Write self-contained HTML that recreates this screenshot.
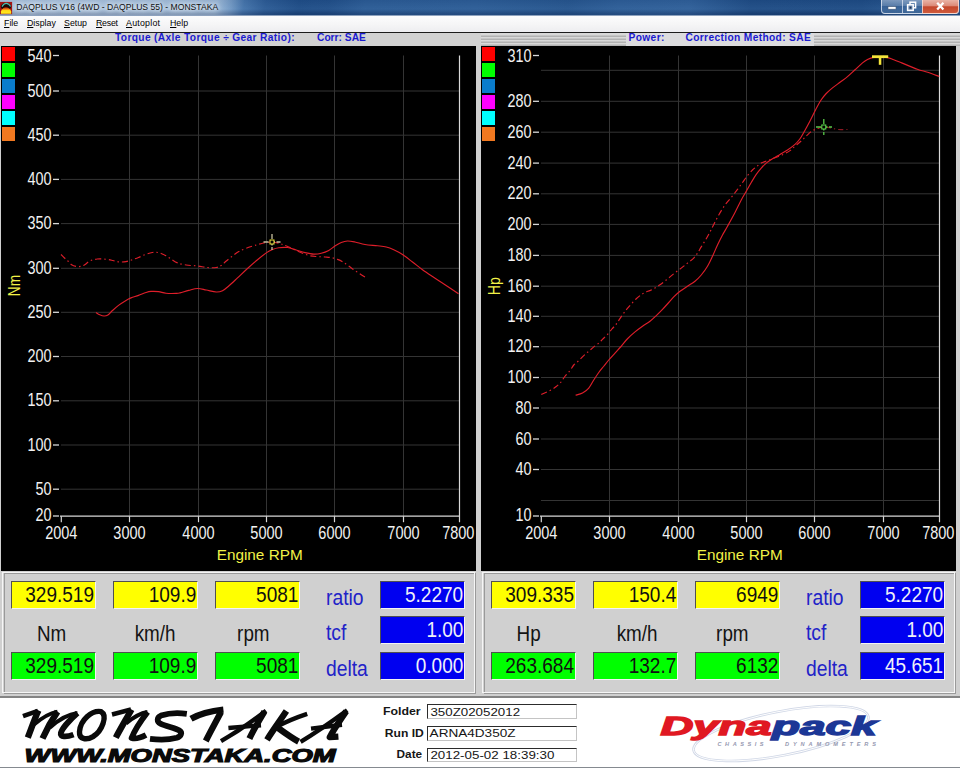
<!DOCTYPE html>
<html><head><meta charset="utf-8"><title>DAQPLUS</title>
<style>
html,body{margin:0;padding:0;}
body{width:960px;height:768px;overflow:hidden;position:relative;background:#d0d0d0;font-family:"Liberation Sans",sans-serif;}
div{position:absolute;box-sizing:border-box;}
#title{left:0;top:0;width:960px;height:15px;background:linear-gradient(100deg,#aac3de 0px,#a6c0dc 150px,#9dbad9 214px,#6f97c3 229px,#4474ab 241px,#2c5c96 262px,#1f4e88 295px,#21508a 325px,#2b5c96 360px,#2c5d97 470px,#26568f 560px,#2d5e98 610px,#2f609a 680px,#1f4d86 740px,#1e4c85 850px,#285891 900px,#2a5a93 960px);}
#title .shade{left:0;top:0;width:960px;height:15px;background:linear-gradient(180deg,rgba(0,0,30,0.06) 0,rgba(255,255,255,0.03) 60%,rgba(0,0,30,0.18) 90%,rgba(0,0,30,0.2) 100%);}
#ttext{left:16.3px;top:0px;font-size:8.6px;line-height:15px;color:#101010;white-space:nowrap;text-shadow:0 0 4px #fff,0 0 6px #e8f0f8;}
#menu{left:0;top:14.6px;width:960px;height:17.4px;background:linear-gradient(180deg,#fcfcfd 0,#f5f5f6 55%,#ededf0 100%);border-top:1.2px solid #8ea2be;}
#menu span{position:absolute;top:0px;font-size:8.8px;line-height:15px;color:#000;white-space:nowrap;}
#menu u{text-decoration:underline;}
#sep{left:0;top:32px;width:960px;height:1px;background:#1c1c1c;}
#hdrL{left:0;top:33px;width:481px;height:13px;background:#d2d2d2;}
#hdrR{left:481px;top:33px;width:479px;height:13px;background:repeating-linear-gradient(180deg,#d9d9d9 0,#d9d9d9 1.3px,#b2b2b2 1.7px,#b2b2b2 2.7px,#d9d9d9 3px);background-position:0 1px;}
.hl{font-weight:bold;font-size:10.2px;line-height:13px;color:#1a1ad0;white-space:pre;top:31.2px;letter-spacing:0.36px;}
#hlR{background:#dcdcde;height:13px;}
#blkL{left:1px;top:46px;width:475px;height:524.5px;background:#000;}
#blkR{left:481px;top:46px;width:475.3px;height:524.8px;background:#000;}
svg{position:absolute;left:0;top:0;}
.ax{font-family:"Liberation Sans",sans-serif;font-size:17.7px;fill:#f2f2f2;}
.yl{font-family:"Liberation Sans",sans-serif;font-size:15.3px;fill:#f2f248;}
.frW{border:1.3px solid #f6f6f6;}
.frD{border:1.3px solid #9a9a9a;}
.box{width:85px;height:28px;font-size:21.3px;line-height:27.8px;text-align:right;padding-right:0.7px;white-space:nowrap;border-top:1px solid #505050;border-left:1px solid #505050;border-right:1px solid #f4f4f4;border-bottom:1px solid #f4f4f4;}
.box span{display:inline-block;transform:scaleX(0.893);transform-origin:right center;}
.unit span{display:inline-block;transform:scaleX(0.885);transform-origin:center center;}
.blab span{display:inline-block;transform:scaleX(0.905);transform-origin:left center;}
.box.y{background:#ffff00;color:#101010;}
.box.g{background:#00ff00;color:#101010;}
.box.b{background:#0000f0;color:#f0f0f8;}
.unit{width:80px;text-align:center;font-size:21.3px;line-height:26px;color:#141414;}
.blab{font-size:21.3px;line-height:26px;color:#2222c8;}
#bot{left:0;top:697.6px;width:960px;height:70.4px;background:#fff;border-bottom:1.8px solid #858a90;}
#botline{left:0;top:696.4px;width:960px;height:1.3px;background:#848484;}
.fl{font-weight:bold;font-size:11.6px;line-height:14px;color:#111;text-align:right;width:60px;left:361px;}
.fi{left:427.3px;width:149.5px;height:14.8px;background:#fff;border-top:1.4px solid #2c2c2c;border-left:1.3px solid #2c2c2c;border-right:1px solid #c4c4c4;border-bottom:1px solid #c4c4c4;font-size:12.6px;line-height:13px;padding-left:2px;color:#111;white-space:nowrap;letter-spacing:0.45px;}
</style></head><body>
<div id="title"><div class="shade"></div></div>
<svg width="16" height="16" viewBox="0 0 16 16" style="left:0;top:0">
<defs><linearGradient id="dome" x1="0" y1="0" x2="0" y2="1"><stop offset="0" stop-color="#a82008"/><stop offset="0.28" stop-color="#f07010"/><stop offset="0.5" stop-color="#ffd818"/><stop offset="1" stop-color="#fff020"/></linearGradient></defs>
<rect x="0" y="1.9" width="12.1" height="12.3" fill="#a01412"/>
<ellipse cx="6" cy="6.6" rx="5.2" ry="3.6" fill="#1a0806"/>
<path d="M0.9 13.7 L0.9 11.4 C2 8.6 4 7.3 6 7.3 C8 7.3 10.2 8.6 11.2 11.4 L11.2 13.7 Z" fill="url(#dome)"/>
<path d="M2 6.6 C3.4 4 5 3.4 6.2 3.4 C7.6 3.4 9.4 4.2 10.6 6.6" fill="none" stroke="#4cbcae" stroke-width="1.2"/>
</svg>
<div id="ttext">DAQPLUS V16 (4WD - DAQPLUS 55) - MONSTAKA</div>
<!-- window buttons -->
<div style="left:881px;top:0;width:78px;height:13.5px;border:1px solid rgba(235,240,250,0.75);border-top:none;border-radius:0 0 4px 4px;background:linear-gradient(180deg,rgba(200,215,235,0.55) 0,rgba(150,175,205,0.45) 45%,rgba(70,110,160,0.5) 50%,rgba(90,130,175,0.5) 100%);"></div>
<div style="left:922px;top:0;width:37px;height:13.5px;border:1px solid rgba(245,225,220,0.8);border-top:none;border-radius:0 0 4px 0;background:linear-gradient(180deg,#e9b3a6 0,#dc8a78 45%,#c4472c 52%,#cf5a3c 100%);"></div>
<div style="left:901.5px;top:0;width:1px;height:13px;background:rgba(235,240,250,0.7);"></div>
<svg width="960" height="15" viewBox="0 0 960 15" style="left:0;top:0">
<rect x="888" y="6.6" width="8" height="2.6" fill="#fff" stroke="#445a78" stroke-width="0.6"/>
<rect x="910" y="2.2" width="5.6" height="5.6" fill="none" stroke="#fff" stroke-width="1.5"/>
<rect x="907.6" y="4.8" width="5.6" height="5.6" fill="#6d8db5" stroke="#fff" stroke-width="1.5"/>
<rect x="909.6" y="6.6" width="1.8" height="2" fill="#1e3350"/>
<path d="M937.2 2.8 L943.4 9.6 M943.4 2.8 L937.2 9.6" stroke="#fff" stroke-width="2.3" fill="none"/>
</svg>
<div id="menu">
<span style="left:4px"><u>F</u>ile</span>
<span style="left:27px"><u>D</u>isplay</span>
<span style="left:64px"><u>S</u>etup</span>
<span style="left:96px;letter-spacing:-0.25px"><u>R</u>eset</span>
<span style="left:126px;letter-spacing:0.25px"><u>A</u>utoplot</span>
<span style="left:170px"><u>H</u>elp</span>
</div>
<div id="sep"></div>
<div id="hdrL"></div>
<div id="hdrR"></div>
<div class="hl" style="left:115px">Torque (Axle Torque &#247; Gear Ratio):</div>
<div class="hl" style="left:317px;letter-spacing:0.02px">Corr: SAE</div>
<div class="hl" id="hlR" style="left:625.5px;width:188.5px;top:33px;"></div>
<div class="hl" style="left:628.6px">Power:</div>
<div class="hl" style="left:685.5px">Correction Method: SAE</div>
<div id="blkL"></div>
<div id="blkR"></div>
<svg width="960" height="768" viewBox="0 0 960 768">
<rect x="2" y="47" width="13" height="14" fill="#ff0000"/>
<rect x="2" y="63" width="13" height="14" fill="#00ff00"/>
<rect x="2" y="79" width="13" height="14" fill="#0a7ccc"/>
<rect x="2" y="95" width="13" height="14" fill="#ff00ff"/>
<rect x="2" y="111" width="13" height="14" fill="#00ffff"/>
<rect x="2" y="127" width="13" height="14" fill="#f07820"/>
<rect x="482" y="47" width="13" height="14" fill="#ff0000"/>
<rect x="482" y="63" width="13" height="14" fill="#00ff00"/>
<rect x="482" y="79" width="13" height="14" fill="#0a7ccc"/>
<rect x="482" y="95" width="13" height="14" fill="#ff00ff"/>
<rect x="482" y="111" width="13" height="14" fill="#00ffff"/>
<rect x="482" y="127" width="13" height="14" fill="#f07820"/>
<line x1="129.5" y1="55.5" x2="129.5" y2="516.2" stroke="#343434" stroke-width="1"/>
<line x1="198.5" y1="55.5" x2="198.5" y2="516.2" stroke="#343434" stroke-width="1"/>
<line x1="266.5" y1="55.5" x2="266.5" y2="516.2" stroke="#343434" stroke-width="1"/>
<line x1="334.5" y1="55.5" x2="334.5" y2="516.2" stroke="#343434" stroke-width="1"/>
<line x1="403.5" y1="55.5" x2="403.5" y2="516.2" stroke="#343434" stroke-width="1"/>
<line x1="61.0" y1="91.0" x2="459.5" y2="91.0" stroke="#343434" stroke-width="1"/>
<line x1="61.0" y1="135.2" x2="459.5" y2="135.2" stroke="#343434" stroke-width="1"/>
<line x1="61.0" y1="179.4" x2="459.5" y2="179.4" stroke="#343434" stroke-width="1"/>
<line x1="61.0" y1="223.6" x2="459.5" y2="223.6" stroke="#343434" stroke-width="1"/>
<line x1="61.0" y1="268.3" x2="459.5" y2="268.3" stroke="#343434" stroke-width="1"/>
<line x1="61.0" y1="312.3" x2="459.5" y2="312.3" stroke="#343434" stroke-width="1"/>
<line x1="61.0" y1="356.5" x2="459.5" y2="356.5" stroke="#343434" stroke-width="1"/>
<line x1="61.0" y1="400.8" x2="459.5" y2="400.8" stroke="#343434" stroke-width="1"/>
<line x1="61.0" y1="445.0" x2="459.5" y2="445.0" stroke="#343434" stroke-width="1"/>
<line x1="61.0" y1="489.2" x2="459.5" y2="489.2" stroke="#343434" stroke-width="1"/>
<line x1="459.5" y1="55.5" x2="459.5" y2="522.2" stroke="#d8d8d8" stroke-width="1.2"/>
<line x1="60.0" y1="516.2" x2="459.5" y2="516.2" stroke="#d8d8d8" stroke-width="1.2"/>
<line x1="61.3" y1="516.2" x2="61.3" y2="522.2" stroke="#d8d8d8" stroke-width="1.2"/>
<text x="61.3" y="538.9" text-anchor="middle" textLength="32.3" lengthAdjust="spacingAndGlyphs" class="ax">2004</text>
<line x1="129.5" y1="516.2" x2="129.5" y2="522.2" stroke="#d8d8d8" stroke-width="1.2"/>
<text x="129.5" y="538.9" text-anchor="middle" textLength="32.3" lengthAdjust="spacingAndGlyphs" class="ax">3000</text>
<line x1="198.5" y1="516.2" x2="198.5" y2="522.2" stroke="#d8d8d8" stroke-width="1.2"/>
<text x="198.5" y="538.9" text-anchor="middle" textLength="32.3" lengthAdjust="spacingAndGlyphs" class="ax">4000</text>
<line x1="266.5" y1="516.2" x2="266.5" y2="522.2" stroke="#d8d8d8" stroke-width="1.2"/>
<text x="266.5" y="538.9" text-anchor="middle" textLength="32.3" lengthAdjust="spacingAndGlyphs" class="ax">5000</text>
<line x1="334.5" y1="516.2" x2="334.5" y2="522.2" stroke="#d8d8d8" stroke-width="1.2"/>
<text x="334.5" y="538.9" text-anchor="middle" textLength="32.3" lengthAdjust="spacingAndGlyphs" class="ax">6000</text>
<line x1="403.5" y1="516.2" x2="403.5" y2="522.2" stroke="#d8d8d8" stroke-width="1.2"/>
<text x="403.5" y="538.9" text-anchor="middle" textLength="32.3" lengthAdjust="spacingAndGlyphs" class="ax">7000</text>
<text x="458.3" y="538.9" text-anchor="middle" textLength="32.3" lengthAdjust="spacingAndGlyphs" class="ax">7800</text>
<line x1="53.0" y1="55.5" x2="59.0" y2="55.5" stroke="#d8d8d8" stroke-width="1.3"/>
<text x="51.5" y="61.8" text-anchor="end" textLength="24.0" lengthAdjust="spacingAndGlyphs" class="ax">540</text>
<line x1="53.0" y1="91.0" x2="59.0" y2="91.0" stroke="#d8d8d8" stroke-width="1.3"/>
<text x="51.5" y="96.6" text-anchor="end" textLength="24.0" lengthAdjust="spacingAndGlyphs" class="ax">500</text>
<line x1="53.0" y1="135.2" x2="59.0" y2="135.2" stroke="#d8d8d8" stroke-width="1.3"/>
<text x="51.5" y="140.8" text-anchor="end" textLength="24.0" lengthAdjust="spacingAndGlyphs" class="ax">450</text>
<line x1="53.0" y1="179.4" x2="59.0" y2="179.4" stroke="#d8d8d8" stroke-width="1.3"/>
<text x="51.5" y="185.0" text-anchor="end" textLength="24.0" lengthAdjust="spacingAndGlyphs" class="ax">400</text>
<line x1="53.0" y1="223.6" x2="59.0" y2="223.6" stroke="#d8d8d8" stroke-width="1.3"/>
<text x="51.5" y="229.2" text-anchor="end" textLength="24.0" lengthAdjust="spacingAndGlyphs" class="ax">350</text>
<line x1="53.0" y1="268.3" x2="59.0" y2="268.3" stroke="#d8d8d8" stroke-width="1.3"/>
<text x="51.5" y="273.9" text-anchor="end" textLength="24.0" lengthAdjust="spacingAndGlyphs" class="ax">300</text>
<line x1="53.0" y1="312.3" x2="59.0" y2="312.3" stroke="#d8d8d8" stroke-width="1.3"/>
<text x="51.5" y="317.9" text-anchor="end" textLength="24.0" lengthAdjust="spacingAndGlyphs" class="ax">250</text>
<line x1="53.0" y1="356.5" x2="59.0" y2="356.5" stroke="#d8d8d8" stroke-width="1.3"/>
<text x="51.5" y="362.1" text-anchor="end" textLength="24.0" lengthAdjust="spacingAndGlyphs" class="ax">200</text>
<line x1="53.0" y1="400.8" x2="59.0" y2="400.8" stroke="#d8d8d8" stroke-width="1.3"/>
<text x="51.5" y="406.4" text-anchor="end" textLength="24.0" lengthAdjust="spacingAndGlyphs" class="ax">150</text>
<line x1="53.0" y1="445.0" x2="59.0" y2="445.0" stroke="#d8d8d8" stroke-width="1.3"/>
<text x="51.5" y="450.6" text-anchor="end" textLength="24.0" lengthAdjust="spacingAndGlyphs" class="ax">100</text>
<line x1="53.0" y1="489.2" x2="59.0" y2="489.2" stroke="#d8d8d8" stroke-width="1.3"/>
<text x="51.5" y="494.8" text-anchor="end" textLength="16.0" lengthAdjust="spacingAndGlyphs" class="ax">50</text>
<line x1="53.0" y1="516.0" x2="59.0" y2="516.0" stroke="#d8d8d8" stroke-width="1.3"/>
<text x="51.5" y="520.8" text-anchor="end" textLength="16.0" lengthAdjust="spacingAndGlyphs" class="ax">20</text>
<text x="259.7" y="560" text-anchor="middle" class="yl">Engine RPM</text>
<text transform="translate(19.6,285.6) rotate(-90)" text-anchor="middle" style="font-size:16.2px" class="yl" textLength="21.2" lengthAdjust="spacingAndGlyphs">Nm</text>
<path d="M61.00 254.50 C61.58 255.08 63.35 256.92 64.50 258.00 C65.65 259.08 66.72 259.88 67.90 261.00 C69.08 262.12 70.25 263.85 71.60 264.75 C72.95 265.65 74.53 266.12 76.00 266.40 C77.47 266.67 78.94 266.67 80.40 266.40 C81.86 266.12 83.19 265.65 84.75 264.75 C86.31 263.85 87.67 261.96 89.75 261.00 C91.83 260.04 94.54 259.29 97.25 259.00 C99.96 258.71 103.39 259.00 106.00 259.25 C108.61 259.50 110.82 260.06 112.90 260.50 C114.98 260.94 116.32 261.72 118.50 261.90 C120.68 262.08 123.71 261.96 126.00 261.60 C128.29 261.24 130.17 260.43 132.25 259.75 C134.33 259.07 136.31 258.38 138.50 257.50 C140.69 256.62 143.11 255.33 145.40 254.50 C147.69 253.67 150.07 252.82 152.25 252.50 C154.43 252.18 156.31 252.12 158.50 252.60 C160.69 253.08 163.32 254.33 165.40 255.40 C167.48 256.47 168.98 257.75 171.00 259.00 C173.02 260.25 174.96 261.90 177.50 262.90 C180.04 263.90 182.92 264.48 186.25 265.00 C189.58 265.52 193.96 265.58 197.50 266.00 C201.04 266.42 204.38 267.25 207.50 267.50 C210.62 267.75 213.96 267.85 216.25 267.50 C218.54 267.15 219.58 266.48 221.25 265.40 C222.92 264.32 224.38 262.57 226.25 261.00 C228.12 259.43 230.42 257.57 232.50 256.00 C234.58 254.43 236.46 252.89 238.75 251.60 C241.04 250.31 243.33 249.35 246.25 248.25 C249.17 247.15 253.54 245.83 256.25 245.00 C258.96 244.17 260.42 243.71 262.50 243.25 C264.58 242.79 267.17 242.46 268.75 242.25 C270.33 242.04 270.12 241.79 272.00 242.00 C273.88 242.21 278.04 243.00 280.00 243.50 C281.96 244.00 282.29 244.42 283.75 245.00 C285.21 245.58 286.67 246.10 288.75 247.00 C290.83 247.90 293.96 249.36 296.25 250.40 C298.54 251.44 300.21 252.36 302.50 253.25 C304.79 254.14 307.50 255.19 310.00 255.75 C312.50 256.31 315.00 256.39 317.50 256.60 C320.00 256.81 322.71 256.83 325.00 257.00 C327.29 257.17 329.17 257.20 331.25 257.60 C333.33 258.00 335.52 258.67 337.50 259.40 C339.48 260.13 341.23 260.90 343.10 262.00 C344.98 263.10 346.77 264.57 348.75 266.00 C350.73 267.43 352.92 269.14 355.00 270.60 C357.08 272.06 359.42 273.60 361.25 274.75 C363.08 275.90 365.21 277.04 366.00 277.50" fill="none" stroke="#de1e2a" stroke-width="1.15" stroke-dasharray="6 3 1.5 3"/>
<path d="M96.00 312.50 C96.62 312.88 98.42 314.17 99.75 314.75 C101.08 315.33 102.64 315.96 104.00 316.00 C105.36 316.04 106.53 315.88 107.90 315.00 C109.28 314.12 110.48 312.35 112.25 310.75 C114.02 309.15 116.21 307.12 118.50 305.40 C120.79 303.67 123.92 301.65 126.00 300.40 C128.08 299.15 128.92 298.73 131.00 297.90 C133.08 297.07 136.00 296.30 138.50 295.40 C141.00 294.50 143.92 293.17 146.00 292.50 C148.08 291.83 148.92 291.55 151.00 291.40 C153.08 291.25 156.00 291.29 158.50 291.60 C161.00 291.91 163.08 292.95 166.00 293.25 C168.92 293.55 173.67 293.46 176.00 293.40 C178.33 293.34 177.88 293.40 180.00 292.90 C182.12 292.40 185.83 291.13 188.75 290.40 C191.67 289.67 194.58 288.57 197.50 288.50 C200.42 288.43 203.12 289.42 206.25 290.00 C209.38 290.58 213.54 291.88 216.25 292.00 C218.96 292.12 220.42 291.75 222.50 290.75 C224.58 289.75 226.25 288.14 228.75 286.00 C231.25 283.86 234.38 280.82 237.50 277.90 C240.62 274.98 244.17 271.52 247.50 268.50 C250.83 265.48 254.38 262.35 257.50 259.75 C260.62 257.15 263.75 254.61 266.25 252.90 C268.75 251.19 270.42 250.37 272.50 249.50 C274.58 248.63 276.25 248.03 278.75 247.70 C281.25 247.37 284.58 247.12 287.50 247.50 C290.42 247.88 293.33 249.15 296.25 250.00 C299.17 250.85 302.08 251.92 305.00 252.60 C307.92 253.28 311.04 253.99 313.75 254.10 C316.46 254.21 318.75 253.87 321.25 253.25 C323.75 252.63 326.46 251.61 328.75 250.40 C331.04 249.19 332.92 247.32 335.00 246.00 C337.08 244.68 339.17 243.33 341.25 242.50 C343.33 241.67 345.21 241.08 347.50 241.00 C349.79 240.92 352.08 241.42 355.00 242.00 C357.92 242.58 361.25 243.88 365.00 244.50 C368.75 245.12 373.96 245.33 377.50 245.75 C381.04 246.17 383.54 246.33 386.25 247.00 C388.96 247.67 391.04 248.50 393.75 249.75 C396.46 251.00 399.38 252.46 402.50 254.50 C405.62 256.54 409.17 259.46 412.50 262.00 C415.83 264.54 419.17 267.32 422.50 269.75 C425.83 272.18 428.75 274.10 432.50 276.60 C436.25 279.10 440.67 281.89 445.00 284.75 C449.33 287.61 456.25 292.25 458.50 293.75" fill="none" stroke="#de1e2a" stroke-width="1.15"/>

<g>
<line x1="263.5" y1="242" x2="280.5" y2="242" stroke="#c8c0a0" stroke-width="1.3" stroke-dasharray="5 1.5"/>
<line x1="272" y1="234" x2="272" y2="250" stroke="#c8c0a0" stroke-width="1.3" stroke-dasharray="5 1.5"/>
<rect x="270" y="240" width="4" height="4" fill="#000" stroke="#f0e840" stroke-width="1"/>
</g>
<line x1="609.5" y1="55.5" x2="609.5" y2="516.2" stroke="#343434" stroke-width="1"/>
<line x1="678.5" y1="55.5" x2="678.5" y2="516.2" stroke="#343434" stroke-width="1"/>
<line x1="746.5" y1="55.5" x2="746.5" y2="516.2" stroke="#343434" stroke-width="1"/>
<line x1="814.5" y1="55.5" x2="814.5" y2="516.2" stroke="#343434" stroke-width="1"/>
<line x1="883.5" y1="55.5" x2="883.5" y2="516.2" stroke="#343434" stroke-width="1"/>
<line x1="541.0" y1="70.3" x2="939.5" y2="70.3" stroke="#343434" stroke-width="1"/>
<line x1="541.0" y1="101.3" x2="939.5" y2="101.3" stroke="#343434" stroke-width="1"/>
<line x1="541.0" y1="132.2" x2="939.5" y2="132.2" stroke="#343434" stroke-width="1"/>
<line x1="541.0" y1="163.1" x2="939.5" y2="163.1" stroke="#343434" stroke-width="1"/>
<line x1="541.0" y1="193.8" x2="939.5" y2="193.8" stroke="#343434" stroke-width="1"/>
<line x1="541.0" y1="224.4" x2="939.5" y2="224.4" stroke="#343434" stroke-width="1"/>
<line x1="541.0" y1="255.4" x2="939.5" y2="255.4" stroke="#343434" stroke-width="1"/>
<line x1="541.0" y1="286.2" x2="939.5" y2="286.2" stroke="#343434" stroke-width="1"/>
<line x1="541.0" y1="316.3" x2="939.5" y2="316.3" stroke="#343434" stroke-width="1"/>
<line x1="541.0" y1="346.7" x2="939.5" y2="346.7" stroke="#343434" stroke-width="1"/>
<line x1="541.0" y1="377.5" x2="939.5" y2="377.5" stroke="#343434" stroke-width="1"/>
<line x1="541.0" y1="408.0" x2="939.5" y2="408.0" stroke="#343434" stroke-width="1"/>
<line x1="541.0" y1="439.0" x2="939.5" y2="439.0" stroke="#343434" stroke-width="1"/>
<line x1="541.0" y1="469.5" x2="939.5" y2="469.5" stroke="#343434" stroke-width="1"/>
<line x1="541.0" y1="500.5" x2="939.5" y2="500.5" stroke="#343434" stroke-width="1"/>
<line x1="939.5" y1="55.5" x2="939.5" y2="522.2" stroke="#d8d8d8" stroke-width="1.2"/>
<line x1="540.0" y1="516.2" x2="939.5" y2="516.2" stroke="#d8d8d8" stroke-width="1.2"/>
<line x1="541.3" y1="516.2" x2="541.3" y2="522.2" stroke="#d8d8d8" stroke-width="1.2"/>
<text x="541.3" y="538.9" text-anchor="middle" textLength="32.3" lengthAdjust="spacingAndGlyphs" class="ax">2004</text>
<line x1="609.5" y1="516.2" x2="609.5" y2="522.2" stroke="#d8d8d8" stroke-width="1.2"/>
<text x="609.5" y="538.9" text-anchor="middle" textLength="32.3" lengthAdjust="spacingAndGlyphs" class="ax">3000</text>
<line x1="678.5" y1="516.2" x2="678.5" y2="522.2" stroke="#d8d8d8" stroke-width="1.2"/>
<text x="678.5" y="538.9" text-anchor="middle" textLength="32.3" lengthAdjust="spacingAndGlyphs" class="ax">4000</text>
<line x1="746.5" y1="516.2" x2="746.5" y2="522.2" stroke="#d8d8d8" stroke-width="1.2"/>
<text x="746.5" y="538.9" text-anchor="middle" textLength="32.3" lengthAdjust="spacingAndGlyphs" class="ax">5000</text>
<line x1="814.5" y1="516.2" x2="814.5" y2="522.2" stroke="#d8d8d8" stroke-width="1.2"/>
<text x="814.5" y="538.9" text-anchor="middle" textLength="32.3" lengthAdjust="spacingAndGlyphs" class="ax">6000</text>
<line x1="883.5" y1="516.2" x2="883.5" y2="522.2" stroke="#d8d8d8" stroke-width="1.2"/>
<text x="883.5" y="538.9" text-anchor="middle" textLength="32.3" lengthAdjust="spacingAndGlyphs" class="ax">7000</text>
<text x="938.3" y="538.9" text-anchor="middle" textLength="32.3" lengthAdjust="spacingAndGlyphs" class="ax">7800</text>
<line x1="533.0" y1="55.5" x2="539.0" y2="55.5" stroke="#d8d8d8" stroke-width="1.3"/>
<text x="531.5" y="61.8" text-anchor="end" textLength="24.0" lengthAdjust="spacingAndGlyphs" class="ax">310</text>
<line x1="533.0" y1="101.3" x2="539.0" y2="101.3" stroke="#d8d8d8" stroke-width="1.3"/>
<text x="531.5" y="106.9" text-anchor="end" textLength="24.0" lengthAdjust="spacingAndGlyphs" class="ax">280</text>
<line x1="533.0" y1="132.2" x2="539.0" y2="132.2" stroke="#d8d8d8" stroke-width="1.3"/>
<text x="531.5" y="137.8" text-anchor="end" textLength="24.0" lengthAdjust="spacingAndGlyphs" class="ax">260</text>
<line x1="533.0" y1="163.1" x2="539.0" y2="163.1" stroke="#d8d8d8" stroke-width="1.3"/>
<text x="531.5" y="168.7" text-anchor="end" textLength="24.0" lengthAdjust="spacingAndGlyphs" class="ax">240</text>
<line x1="533.0" y1="193.8" x2="539.0" y2="193.8" stroke="#d8d8d8" stroke-width="1.3"/>
<text x="531.5" y="199.4" text-anchor="end" textLength="24.0" lengthAdjust="spacingAndGlyphs" class="ax">220</text>
<line x1="533.0" y1="224.4" x2="539.0" y2="224.4" stroke="#d8d8d8" stroke-width="1.3"/>
<text x="531.5" y="230.0" text-anchor="end" textLength="24.0" lengthAdjust="spacingAndGlyphs" class="ax">200</text>
<line x1="533.0" y1="255.4" x2="539.0" y2="255.4" stroke="#d8d8d8" stroke-width="1.3"/>
<text x="531.5" y="261.0" text-anchor="end" textLength="24.0" lengthAdjust="spacingAndGlyphs" class="ax">180</text>
<line x1="533.0" y1="286.2" x2="539.0" y2="286.2" stroke="#d8d8d8" stroke-width="1.3"/>
<text x="531.5" y="291.8" text-anchor="end" textLength="24.0" lengthAdjust="spacingAndGlyphs" class="ax">160</text>
<line x1="533.0" y1="316.3" x2="539.0" y2="316.3" stroke="#d8d8d8" stroke-width="1.3"/>
<text x="531.5" y="321.9" text-anchor="end" textLength="24.0" lengthAdjust="spacingAndGlyphs" class="ax">140</text>
<line x1="533.0" y1="346.7" x2="539.0" y2="346.7" stroke="#d8d8d8" stroke-width="1.3"/>
<text x="531.5" y="352.3" text-anchor="end" textLength="24.0" lengthAdjust="spacingAndGlyphs" class="ax">120</text>
<line x1="533.0" y1="377.5" x2="539.0" y2="377.5" stroke="#d8d8d8" stroke-width="1.3"/>
<text x="531.5" y="383.1" text-anchor="end" textLength="24.0" lengthAdjust="spacingAndGlyphs" class="ax">100</text>
<line x1="533.0" y1="408.0" x2="539.0" y2="408.0" stroke="#d8d8d8" stroke-width="1.3"/>
<text x="531.5" y="413.6" text-anchor="end" textLength="16.0" lengthAdjust="spacingAndGlyphs" class="ax">80</text>
<line x1="533.0" y1="439.0" x2="539.0" y2="439.0" stroke="#d8d8d8" stroke-width="1.3"/>
<text x="531.5" y="444.6" text-anchor="end" textLength="16.0" lengthAdjust="spacingAndGlyphs" class="ax">60</text>
<line x1="533.0" y1="469.5" x2="539.0" y2="469.5" stroke="#d8d8d8" stroke-width="1.3"/>
<text x="531.5" y="475.1" text-anchor="end" textLength="16.0" lengthAdjust="spacingAndGlyphs" class="ax">40</text>
<line x1="533.0" y1="516.0" x2="539.0" y2="516.0" stroke="#d8d8d8" stroke-width="1.3"/>
<text x="531.5" y="520.8" text-anchor="end" textLength="16.0" lengthAdjust="spacingAndGlyphs" class="ax">10</text>
<text x="739.7" y="560" text-anchor="middle" class="yl">Engine RPM</text>
<text transform="translate(499.6,286.2) rotate(-90)" text-anchor="middle" style="font-size:16.2px" class="yl" textLength="17.9" lengthAdjust="spacingAndGlyphs">Hp</text>
<path d="M541.25 394.40 C542.71 393.77 547.50 391.92 550.00 390.60 C552.50 389.28 554.48 387.85 556.25 386.50 C558.02 385.15 559.14 384.21 560.60 382.50 C562.06 380.79 563.43 378.23 565.00 376.25 C566.57 374.27 568.54 372.48 570.00 370.60 C571.46 368.73 572.29 366.67 573.75 365.00 C575.21 363.33 577.08 362.17 578.75 360.60 C580.42 359.03 582.08 357.16 583.75 355.60 C585.42 354.04 587.08 352.70 588.75 351.25 C590.42 349.80 592.08 348.26 593.75 346.90 C595.42 345.54 597.29 344.35 598.75 343.10 C600.21 341.85 601.04 340.85 602.50 339.40 C603.96 337.95 605.93 336.13 607.50 334.40 C609.07 332.67 610.55 330.57 611.90 329.00 C613.25 327.43 614.35 326.60 615.60 325.00 C616.85 323.40 618.04 321.38 619.40 319.40 C620.76 317.42 622.19 315.18 623.75 313.10 C625.31 311.02 626.67 309.29 628.75 306.90 C630.83 304.51 633.75 301.05 636.25 298.75 C638.75 296.45 641.25 294.56 643.75 293.10 C646.25 291.64 648.75 291.25 651.25 290.00 C653.75 288.75 656.25 287.27 658.75 285.60 C661.25 283.93 663.75 281.98 666.25 280.00 C668.75 278.02 671.25 275.73 673.75 273.75 C676.25 271.77 678.96 269.88 681.25 268.10 C683.54 266.33 685.42 264.77 687.50 263.10 C689.58 261.43 692.08 259.77 693.75 258.10 C695.42 256.43 696.25 254.97 697.50 253.10 C698.75 251.23 699.79 249.29 701.25 246.90 C702.71 244.51 704.79 241.25 706.25 238.75 C707.71 236.25 708.79 234.19 710.00 231.90 C711.21 229.61 712.04 227.82 713.50 225.00 C714.96 222.18 716.83 218.33 718.75 215.00 C720.67 211.67 722.92 207.92 725.00 205.00 C727.08 202.08 729.17 200.10 731.25 197.50 C733.33 194.90 735.62 191.90 737.50 189.40 C739.38 186.90 740.83 184.80 742.50 182.50 C744.17 180.20 745.83 177.68 747.50 175.60 C749.17 173.52 751.04 171.45 752.50 170.00 C753.96 168.55 754.79 168.05 756.25 166.90 C757.71 165.75 759.38 164.15 761.25 163.10 C763.12 162.05 765.21 161.49 767.50 160.60 C769.79 159.71 772.50 158.72 775.00 157.75 C777.50 156.78 780.00 155.94 782.50 154.75 C785.00 153.56 787.92 152.02 790.00 150.60 C792.08 149.18 793.33 147.68 795.00 146.25 C796.67 144.82 798.54 143.28 800.00 142.00 C801.46 140.72 802.60 139.70 803.75 138.60 C804.90 137.50 805.65 136.57 806.90 135.40 C808.15 134.23 809.48 132.75 811.25 131.60 C813.02 130.45 815.42 129.27 817.50 128.50 C819.58 127.73 822.71 127.25 823.75 127.00" fill="none" stroke="#de1e2a" stroke-width="1.15" stroke-dasharray="6 3 1.5 3"/>
<path d="M575.60 395.25 C576.75 394.89 580.31 394.29 582.50 393.10 C584.69 391.91 586.88 390.28 588.75 388.10 C590.62 385.92 592.08 382.60 593.75 380.00 C595.42 377.40 597.08 374.79 598.75 372.50 C600.42 370.21 602.08 368.33 603.75 366.25 C605.42 364.17 606.88 362.19 608.75 360.00 C610.62 357.81 612.92 355.39 615.00 353.10 C617.08 350.81 619.17 348.64 621.25 346.25 C623.33 343.86 625.21 341.14 627.50 338.75 C629.79 336.36 632.50 333.98 635.00 331.90 C637.50 329.82 640.00 328.02 642.50 326.25 C645.00 324.48 647.71 323.02 650.00 321.25 C652.29 319.48 654.17 317.58 656.25 315.60 C658.33 313.62 660.42 311.58 662.50 309.40 C664.58 307.22 666.88 304.58 668.75 302.50 C670.62 300.42 671.88 298.77 673.75 296.90 C675.62 295.02 677.71 293.02 680.00 291.25 C682.29 289.48 685.00 287.92 687.50 286.25 C690.00 284.58 692.71 283.12 695.00 281.25 C697.29 279.38 699.17 277.50 701.25 275.00 C703.33 272.50 705.62 269.38 707.50 266.25 C709.38 263.12 710.83 259.79 712.50 256.25 C714.17 252.71 715.83 248.54 717.50 245.00 C719.17 241.46 720.83 238.12 722.50 235.00 C724.17 231.88 725.42 230.00 727.50 226.25 C729.58 222.50 732.71 216.88 735.00 212.50 C737.29 208.12 739.38 203.54 741.25 200.00 C743.12 196.46 744.58 194.17 746.25 191.25 C747.92 188.33 749.58 185.31 751.25 182.50 C752.92 179.69 754.58 176.80 756.25 174.40 C757.92 172.00 759.58 169.98 761.25 168.10 C762.92 166.22 764.38 164.66 766.25 163.10 C768.12 161.54 770.21 160.20 772.50 158.75 C774.79 157.30 777.50 155.86 780.00 154.40 C782.50 152.94 785.00 151.67 787.50 150.00 C790.00 148.33 792.92 146.28 795.00 144.40 C797.08 142.53 798.54 140.73 800.00 138.75 C801.46 136.77 802.08 135.46 803.75 132.50 C805.42 129.54 807.92 125.00 810.00 121.00 C812.08 117.00 814.38 112.04 816.25 108.50 C818.12 104.96 819.58 102.25 821.25 99.75 C822.92 97.25 824.38 95.47 826.25 93.50 C828.12 91.53 830.21 89.78 832.50 87.90 C834.79 86.03 837.50 84.13 840.00 82.25 C842.50 80.37 845.00 78.68 847.50 76.60 C850.00 74.52 852.50 72.03 855.00 69.75 C857.50 67.47 860.42 64.61 862.50 62.90 C864.58 61.19 865.83 60.38 867.50 59.50 C869.17 58.62 870.42 58.02 872.50 57.60 C874.58 57.18 877.50 57.00 880.00 57.00 C882.50 57.00 885.21 57.14 887.50 57.60 C889.79 58.06 891.38 58.87 893.75 59.75 C896.12 60.63 897.78 61.32 901.70 62.90 C905.62 64.47 912.97 67.63 917.30 69.20 C921.63 70.77 924.05 71.08 927.70 72.30 C931.35 73.52 937.28 75.80 939.20 76.50" fill="none" stroke="#de1e2a" stroke-width="1.15"/>
<path d="M826.00 127.20 C827.08 127.38 830.58 127.87 832.50 128.25 C834.42 128.63 835.00 129.29 837.50 129.50 C840.00 129.71 845.83 129.50 847.50 129.50" fill="none" stroke="#8c1822" stroke-width="1.15" stroke-dasharray="5 3 1.5 3"/>
<g>
<rect x="872" y="55.3" width="16.2" height="2.8" fill="#f4e43a"/>
<rect x="878.8" y="57" width="2.5" height="7.8" fill="#f4e43a"/>
<line x1="816" y1="127" x2="832" y2="127" stroke="#58c848" stroke-width="1.3" stroke-dasharray="5 1.5"/>
<line x1="823.8" y1="119" x2="823.8" y2="135" stroke="#58c848" stroke-width="1.3" stroke-dasharray="5 1.5"/>
<rect x="821.8" y="125" width="4" height="4" fill="#000" stroke="#60e050" stroke-width="1"/>
</g>
</svg>
<div class="frD" style="left:3.6px;top:573px;width:472.5px;height:121px"></div>
<div class="frW" style="left:2.2px;top:571.5px;width:472.5px;height:121px"></div>
<div class="box y" style="left:11px;top:581px"><span>329.519</span></div>
<div class="box y" style="left:113px;top:581px"><span>109.9</span></div>
<div class="box y" style="left:215px;top:581px"><span>5081</span></div>
<div class="box g" style="left:11px;top:652px"><span>329.519</span></div>
<div class="box g" style="left:113px;top:652px"><span>109.9</span></div>
<div class="box g" style="left:215px;top:652px"><span>5081</span></div>
<div class="unit" style="left:12.0px;top:620.7px"><span>Nm</span></div>
<div class="unit" style="left:115.5px;top:620.7px"><span>km/h</span></div>
<div class="unit" style="left:213.5px;top:620.7px"><span>rpm</span></div>
<div class="blab" style="left:326px;top:584.6px"><span>ratio</span></div>
<div class="box b" style="left:380px;top:581px"><span>5.2270</span></div>
<div class="blab" style="left:326px;top:619.6px"><span>tcf</span></div>
<div class="box b" style="left:380px;top:616px"><span>1.00</span></div>
<div class="blab" style="left:326px;top:655.6px"><span>delta</span></div>
<div class="box b" style="left:380px;top:652px"><span>0.000</span></div>
<div class="frD" style="left:483.6px;top:573px;width:472.5px;height:121px"></div>
<div class="frW" style="left:482.2px;top:571.5px;width:472.5px;height:121px"></div>
<div class="box y" style="left:491px;top:581px"><span>309.335</span></div>
<div class="box y" style="left:593px;top:581px"><span>150.4</span></div>
<div class="box y" style="left:695px;top:581px"><span>6949</span></div>
<div class="box g" style="left:491px;top:652px"><span>263.684</span></div>
<div class="box g" style="left:593px;top:652px"><span>132.7</span></div>
<div class="box g" style="left:695px;top:652px"><span>6132</span></div>
<div class="unit" style="left:488.9px;top:620.7px"><span>Hp</span></div>
<div class="unit" style="left:597.0px;top:620.7px"><span>km/h</span></div>
<div class="unit" style="left:692.5px;top:620.7px"><span>rpm</span></div>
<div class="blab" style="left:806px;top:584.6px"><span>ratio</span></div>
<div class="box b" style="left:860px;top:581px"><span>5.2270</span></div>
<div class="blab" style="left:806px;top:619.6px"><span>tcf</span></div>
<div class="box b" style="left:860px;top:616px"><span>1.00</span></div>
<div class="blab" style="left:806px;top:655.6px"><span>delta</span></div>
<div class="box b" style="left:860px;top:652px"><span>45.651</span></div>
<div id="botline"></div>
<div id="bot"></div>
<!-- MONSTAKA logo -->
<svg width="360" height="70" viewBox="0 698 360 70" style="left:0;top:698px">
<g fill="none" stroke="#0a0a0a" stroke-linecap="butt" stroke-linejoin="round" transform="translate(0,1.6)">
<!-- M -->
<path d="M23,714.6 L38,709.2" stroke-width="4.6"/>
<path d="M38.5,708.8 C35,716 31,728 27.8,736" stroke-width="6.3"/>
<path d="M34,723 C42,716 50,711.5 57.5,710" stroke-width="4"/>
<path d="M57.5,710 C52,718 46,729 42.5,737" stroke-width="6.3"/>
<path d="M50,726 C60,717 70,712.5 77.5,711.5" stroke-width="4"/>
<path d="M77.5,711.5 C70,718 62,727 60.8,731.5 C59.8,735.5 66,735.8 73.5,733" stroke-width="5.8"/>
<!-- O -->
<path d="M101,710 C92,708.5 80.5,718 79.5,730 C79,737.5 86,739 93,735 C102,729.5 108,714 101,710 Z" stroke-width="5.4"/>
<!-- N -->
<path d="M112,712.8 L131,708" stroke-width="4.6"/>
<path d="M131.5,707.8 C127,716 120,728 115.8,736" stroke-width="6.3"/>
<path d="M126,722 C133,716 141,711.5 147.5,710.5" stroke-width="4"/>
<path d="M147.6,710.4 C141,719 134,730 131.6,736.4 C135,737.4 141,736 146,733.4" stroke-width="5.8"/>
<!-- S -->
<path d="M186.8,712.2 C178,711 168,711.6 161,714 C156.4,716 157,720.4 160.4,722 C166,724.6 175,726.6 179.6,729 C182.6,731 181,734.8 176.8,736.2 C169,738.2 158,738.2 150,737.2" stroke-width="5.8"/>
<!-- T -->
<path d="M191,717.2 C200,712 212,709.2 223.4,708" stroke-width="6.3"/>
<path d="M221,710.4 C216,720 210,731 205.8,739.4" stroke-width="6.3"/>
<!-- A -->
<path d="M266,709.2 C252,720 236,731 221,739.6" stroke-width="4.4"/>
<path d="M264.4,710 C259,719 253,729 249.4,737" stroke-width="6.3"/>
<path d="M228.4,726.4 L261,723.6" stroke-width="4.4"/>
<!-- K -->
<path d="M286.4,709.4 C280,719 272,730 267,738.2" stroke-width="6.3"/>
<path d="M276.8,725 C286,720 297,715.6 307.2,712.2" stroke-width="4.4"/>
<path d="M277,725.6 C283,730 291,736 298.6,740" stroke-width="6.3"/>
<!-- A -->
<path d="M347.2,708.6 C333,719 316,731 300.6,740.2" stroke-width="4.4"/>
<path d="M346.2,709.6 C340,719 333,729 329.8,735.6 L338.4,735" stroke-width="6.3"/>
<path d="M311,727 L342,723.2" stroke-width="4.4"/>
</g>
<text x="24.6" y="762.3" font-family="Liberation Sans, sans-serif" font-style="italic" font-weight="bold" font-size="17.6" textLength="311" lengthAdjust="spacingAndGlyphs" fill="#0a0a0a" stroke="#0a0a0a" stroke-width="1.1">WWW.MONSTAKA.COM</text>
</svg>
<div class="fi" style="top:704px"></div>
<div class="fi" style="top:726px"></div>
<div class="fi" style="top:747.5px"></div>
<svg width="260" height="70" viewBox="360 698 260 70" style="left:360px;top:698px">
<g font-family="Liberation Sans, sans-serif" font-weight="bold" font-size="10" fill="#161616" lengthAdjust="spacingAndGlyphs">
<text x="382.9" y="715.3" textLength="37.7" lengthAdjust="spacingAndGlyphs">Folder</text>
<text x="384.8" y="736.6" textLength="39" lengthAdjust="spacingAndGlyphs">Run ID</text>
<text x="396.6" y="758.2" textLength="25.6" lengthAdjust="spacingAndGlyphs">Date</text>
</g>
<g font-family="Liberation Sans, sans-serif" font-size="10.5" fill="#161616">
<text x="430.4" y="716" textLength="89.7" lengthAdjust="spacingAndGlyphs">350Z02052012</text>
<text x="429.6" y="737.2" textLength="85.9" lengthAdjust="spacingAndGlyphs">ARNA4D350Z</text>
<text x="430.4" y="758.6" textLength="124" lengthAdjust="spacingAndGlyphs">2012-05-02 18:39:30</text>
</g>
</svg>
<!-- Dynapack logo -->
<svg width="320" height="70" viewBox="0 0 320 70" style="left:640px;top:698px">
<ellipse cx="141" cy="35.5" rx="89" ry="22" fill="none" stroke="#d0d7e6" stroke-width="2.6" transform="rotate(-11 141 35.5)"/>
<ellipse cx="141" cy="35.5" rx="89" ry="22" fill="none" stroke="#fff" stroke-width="0.9" transform="rotate(-11 141 35.5)"/>
<text x="20.5" y="36.6" font-family="Liberation Sans, sans-serif" font-style="italic" font-weight="bold" font-size="26" textLength="111" lengthAdjust="spacingAndGlyphs" fill="#e01822" stroke="#e01822" stroke-width="1.4">Dyna</text>
<text x="132" y="36.6" font-family="Liberation Sans, sans-serif" font-style="italic" font-weight="bold" font-size="26" textLength="104.5" lengthAdjust="spacingAndGlyphs" fill="#1c3796" stroke="#1c3796" stroke-width="1.4">pack</text>
<text x="77.5" y="48.2" font-family="Liberation Sans, sans-serif" font-style="italic" font-weight="bold" font-size="5.6" textLength="46" lengthAdjust="spacing" fill="#9598b0">CHASSIS</text>
<text x="145" y="48.2" font-family="Liberation Sans, sans-serif" font-style="italic" font-weight="bold" font-size="5.6" textLength="91" lengthAdjust="spacing" fill="#9598b0">DYNAMOMETERS</text>
</svg>
</body></html>
